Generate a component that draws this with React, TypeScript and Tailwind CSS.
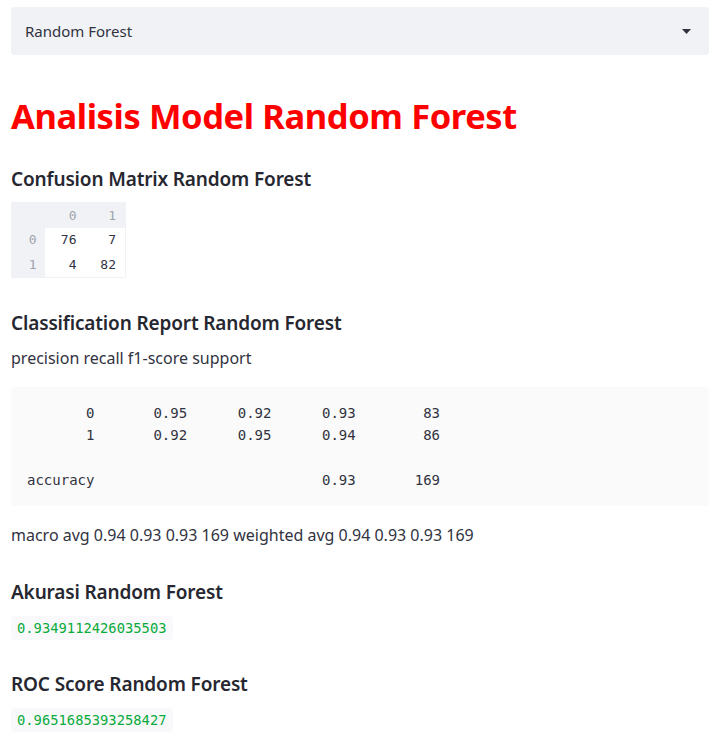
import React from 'react';

const sans = "font-['Noto_Sans',_'Open_Sans',_sans-serif]";
const mono = "font-['DejaVu_Sans_Mono',_'Liberation_Mono',_monospace]";

const reportText = `       0       0.95      0.92      0.93        83
       1       0.92      0.95      0.94        86

accuracy                           0.93       169`;

const matrix = [
  { idx: '0', cells: ['76', '7'] },
  { idx: '1', cells: ['4', '82'] },
];

function Heading({ children, mt }: { children: React.ReactNode; mt: string }) {
  return (
    <h3 className={`${mt} h-[28px] leading-[28px] text-[19px] font-semibold text-[#262730] tracking-[-0.15px]`}>
      {children}
    </h3>
  );
}

function InlineValue({ value }: { value: string }) {
  return (
    <div className="mt-[10px] flex">
      <code className={`${mono} h-[24px] leading-[24px] px-[6px] rounded bg-[#f9f9fb] text-[#09ab3b] text-[13.8px]`}>
        {value}
      </code>
    </div>
  );
}

export default function App() {
  return (
    <div className={`${sans} bg-white min-h-[740px] w-[725px] pt-[7px] px-[11px] pr-[16px] text-[#31333f]`}>
      {/* model selector */}
      <div className="h-[48px] rounded bg-[#f0f2f6] flex items-center justify-between pl-[14px] pr-[18px]">
        <span className="text-[15px] text-[#31333f]">Random Forest</span>
        <svg width="9" height="5" viewBox="0 0 9 5" className="text-[#31333f]">
          <path d="M0 0 L9 0 L4.5 5 Z" fill="currentColor" />
        </svg>
      </div>

      <h1 className="mt-[37px] h-[48px] leading-[48px] text-[34.5px] font-bold text-[#ff0000] tracking-[-0.4px]">
        Analisis Model Random Forest
      </h1>

      <Heading mt="mt-[25px]">Confusion Matrix Random Forest</Heading>

      {/* confusion matrix table */}
      <table className={`${mono} mt-[9px] text-[13px] border-collapse border border-[#f0f2f6]`}>
        <thead>
          <tr className="h-[25px] bg-[#f0f2f6] text-[#a0a4ad]">
            <th className="w-[33px] font-normal"></th>
            <th className="w-[41px] pr-[9px] text-right font-normal">0</th>
            <th className="w-[40px] pr-[9px] text-right font-normal">1</th>
          </tr>
        </thead>
        <tbody>
          {matrix.map((row) => (
            <tr key={row.idx} className="h-[25px]">
              <td className="bg-[#f0f2f6] text-[#a0a4ad] pr-[8px] text-right">{row.idx}</td>
              {row.cells.map((c, i) => (
                <td key={i} className="pr-[9px] text-right text-[#31333f]">{c}</td>
              ))}
            </tr>
          ))}
        </tbody>
      </table>

      <Heading mt="mt-[31px]">Classification Report Random Forest</Heading>
      <p className="mt-[9px] h-[24px] leading-[24px] text-[16px]">precision recall f1-score support</p>

      <pre className={`${mono} mt-[17px] h-[119px] rounded bg-[#fafafa] px-[16px] pt-[15px] text-[14px] leading-[22.4px] text-[#31333f]`}>
        {reportText}
      </pre>

      <p className="mt-[17px] h-[24px] leading-[24px] text-[16px]">
        macro avg 0.94 0.93 0.93 169 weighted avg 0.94 0.93 0.93 169
      </p>

      <Heading mt="mt-[31px]">Akurasi Random Forest</Heading>
      <InlineValue value="0.9349112426035503" />

      <Heading mt="mt-[30px]">ROC Score Random Forest</Heading>
      <InlineValue value="0.9651685393258427" />
    </div>
  );
}
